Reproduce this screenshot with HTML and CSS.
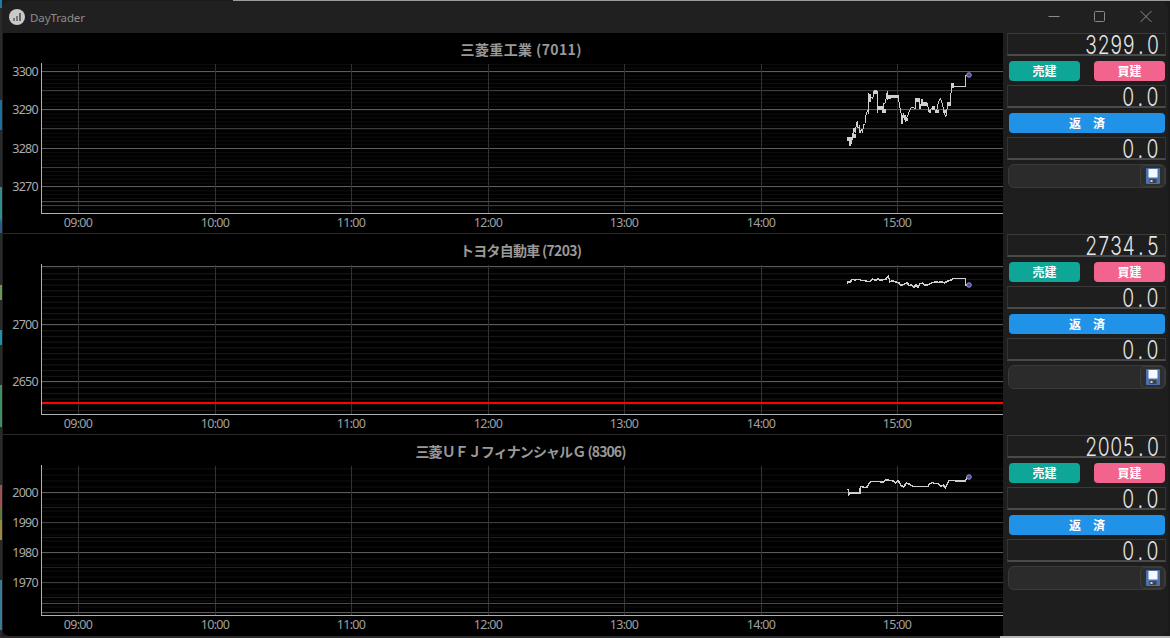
FILE: index.html
```html
<!DOCTYPE html>
<html lang="ja">
<head>
<meta charset="utf-8">
<title>DayTrader</title>
<link rel="stylesheet" href="styles.css">
</head>
<body>
<div class="window">
  <header class="titlebar">
    <svg class="app-icon" viewBox="0 0 16 16" width="16" height="16"><circle cx="8" cy="8" r="8" fill="#c9c9c9"/><rect x="4" y="9" width="2" height="3" fill="#777"/><rect x="7" y="7" width="2" height="5" fill="#777"/><rect x="10" y="4" width="2" height="8" fill="#666"/></svg>
    <span class="app-name">DayTrader</span>
    <div class="win-buttons">
      <svg class="win-btn" viewBox="0 0 46 32" width="46" height="32"><path d="M18.5 15.5h11" stroke="#8a8a8a" fill="none"/></svg>
      <svg class="win-btn" viewBox="0 0 46 32" width="46" height="32"><rect x="18.5" y="10.5" width="10" height="10" rx="1" stroke="#8a8a8a" fill="none"/></svg>
      <svg class="win-btn" viewBox="0 0 46 32" width="46" height="32"><path d="M18.5 10l11 11M29.5 10l-11 11" stroke="#8a8a8a" fill="none"/></svg>
    </div>
  </header>
  <main class="rows">
    <section class="row">
      <svg class="chart" viewBox="3 33 1000 201" width="1000" height="201">
        <defs>
          <pattern id="fine1" width="10" height="3.83" patternUnits="userSpaceOnUse" y="71.5"><rect width="10" height="1" fill="#0e0e0e"/></pattern>
        </defs>
        <rect x="42" y="64" width="961" height="149" fill="url(#fine1)"/>
        <path class="minor" d="M42 90.5H1003M42 128.5H1003M42 167.5H1003M42 205.5H1003"/>
        <path class="major" d="M42 71.5H1003M42 109.5H1003M42 148.5H1003M42 186.5H1003"/>
        <path class="vgrid" d="M78.5 64V213M215.5 64V213M351.5 64V213M488.5 64V213M624.5 64V213M761.5 64V213M897.5 64V213"/>
        <path class="limit" d="M42 201.5H1003"/>
        <path class="axis" d="M41.5 63V213.5H1003"/>
        <path class="sep" d="M3 233.5H1003"/>
        <text class="title" x="521" y="55" textLength="121">三菱重工業 (7011)</text>
        <text class="ylab" x="38" y="76">3300</text><text class="ylab" x="38" y="114">3290</text><text class="ylab" x="38" y="153">3280</text><text class="ylab" x="38" y="191">3270</text>
        <text class="xlab" x="78" y="227">09:00</text><text class="xlab" x="215" y="227">10:00</text><text class="xlab" x="351" y="227">11:00</text><text class="xlab" x="488" y="227">12:00</text><text class="xlab" x="624" y="227">13:00</text><text class="xlab" x="761" y="227">14:00</text><text class="xlab" x="897" y="227">15:00</text>
        <g transform="translate(830 60) scale(.3333)">
          <path class="price" d="M52 235V242H58V255L62 258L64 240H68V218L72 230V205L76 218L80 185H84V205L90 195V218L94 208L98 218L100 195L106 190V172L110 160L113 150L116 162V100L120 125L124 110L128 118L132 92H142V160L146 140L150 150L154 140L158 160L162 130H166L172 92V118L205 105L208 135L213 160L216 192L220 160L226 185L234 165L240 150L246 140L256 148V115H270V148L276 118L282 135L290 125L294 140L298 160L304 145L312 138L318 160L326 125L332 115L338 135L342 160L348 170L350 150L356 130H362L364 72H372V80H406V46H417"/>
          <path class="price-thick" d="M52 236H61V252M66 228H78M80 190H85M116 108H124M133 97H143M144 144H162M173 109H206M162 146V160M216 170H228M226 178H234M256 120H270M272 132H292M296 155H304M306 144H316M318 154H328M340 155H350M352 132H362M364 78H372"/>
          <circle class="dot" cx="417" cy="45" r="7"/>
        </g>
      </svg>
      <aside class="controls">
        <div class="lcd"><span class="lcd-text">3299<span class="pt">.</span>0</span></div>
        <div class="btn-pair"><button class="btn sell">売建</button><button class="btn buy">買建</button></div>
        <div class="lcd"><span class="lcd-text">0<span class="pt">.</span>0</span></div>
        <button class="btn repay">返　済</button>
        <div class="lcd"><span class="lcd-text">0<span class="pt">.</span>0</span></div>
        <div class="save-row"><span class="save-btn"><svg viewBox="0 0 16 16" width="16" height="16"><rect x="1" y="0" width="14" height="16" rx="1" fill="#4c72ad"/><rect x="3.5" y="1" width="9" height="8.5" fill="#f5f8ff"/><rect x="4.5" y="11" width="7" height="4" fill="#3f444c"/><rect x="5.5" y="12" width="2" height="2" fill="#cfd3da"/></svg></span></div>
      </aside>
    </section>
    <section class="row">
      <svg class="chart" viewBox="3 234 1000 201" width="1000" height="201">
        <defs>
          <pattern id="fine2" width="10" height="5.7" patternUnits="userSpaceOnUse" y="267.5"><rect width="10" height="1" fill="#181818"/></pattern>
        </defs>
        <rect x="42" y="266" width="961" height="148" fill="url(#fine2)"/>
        <path class="major" d="M42 266.5H1003M42 324.5H1003M42 381.5H1003"/>
        <path class="vgrid" d="M78.5 265V414M215.5 265V414M351.5 265V414M488.5 265V414M624.5 265V414M761.5 265V414M897.5 265V414"/>
        <path class="limit thick" d="M42 402.5H1003"/>
        <path class="axis" d="M41.5 264V414.5H1003"/>
        <path class="sep" d="M3 434.5H1003"/>
        <text class="title" x="521" y="256" textLength="122">トヨタ自動車 (7203)</text>
        <text class="ylab" x="38" y="329">2700</text><text class="ylab" x="38" y="386">2650</text>
        <text class="xlab" x="78" y="428">09:00</text><text class="xlab" x="215" y="428">10:00</text><text class="xlab" x="351" y="428">11:00</text><text class="xlab" x="488" y="428">12:00</text><text class="xlab" x="624" y="428">13:00</text><text class="xlab" x="761" y="428">14:00</text><text class="xlab" x="897" y="428">15:00</text>
        <g transform="translate(830 265) scale(.3333)">
          <path class="price jag" d="M52 58V50L60 52L66 44H74V46L82 43H90L92 47L104 46L112 50L120 50L128 42L136 46L144 42L152 46L160 44L168 42L175 34L180 50L188 47L196 50L206 53L212 60L218 60L226 56L232 54L238 62L244 60L252 66L258 60L264 66L270 56L278 54L284 60L292 60L300 56L310 52L318 50L326 52L334 50L344 54L352 48L362 46L370 40H406V60H417"/>
          <circle class="dot" cx="417" cy="60" r="7"/>
        </g>
      </svg>
      <aside class="controls">
        <div class="lcd"><span class="lcd-text">2734<span class="pt">.</span>5</span></div>
        <div class="btn-pair"><button class="btn sell">売建</button><button class="btn buy">買建</button></div>
        <div class="lcd"><span class="lcd-text">0<span class="pt">.</span>0</span></div>
        <button class="btn repay">返　済</button>
        <div class="lcd"><span class="lcd-text">0<span class="pt">.</span>0</span></div>
        <div class="save-row"><span class="save-btn"><svg viewBox="0 0 16 16" width="16" height="16"><rect x="1" y="0" width="14" height="16" rx="1" fill="#4c72ad"/><rect x="3.5" y="1" width="9" height="8.5" fill="#f5f8ff"/><rect x="4.5" y="11" width="7" height="4" fill="#3f444c"/><rect x="5.5" y="12" width="2" height="2" fill="#cfd3da"/></svg></span></div>
      </aside>
    </section>
    <section class="row last">
      <svg class="chart" viewBox="3 435 1000 201" width="1000" height="201">
        <defs>
          <pattern id="fine3" width="10" height="6" patternUnits="userSpaceOnUse" y="468.5"><rect width="10" height="1" fill="#0f0f0f"/></pattern>
        </defs>
        <rect x="42" y="466" width="961" height="149" fill="url(#fine3)"/>
        <path class="minor faint" d="M42 507.5H1003M42 537.5H1003M42 567.5H1003M42 597.5H1003"/>
        <path class="minor" d="M42 522.5H1003M42 582.5H1003"/>
        <path class="major" d="M42 492.5H1003M42 552.5H1003M42 612.5H1003"/>
        <path class="vgrid" d="M78.5 466V615M215.5 466V615M351.5 466V615M488.5 466V615M624.5 466V615M761.5 466V615M897.5 466V615"/>
        <path class="limit" d="M42 603.5H1003"/>
        <path class="axis" d="M41.5 465V615.5H1003"/>
        <text class="title" x="521" y="457" textLength="211">三菱ＵＦＪフィナンシャルＧ (8306)</text>
        <text class="ylab" x="38" y="497">2000</text><text class="ylab" x="38" y="527">1990</text><text class="ylab" x="38" y="557">1980</text><text class="ylab" x="38" y="587">1970</text>
        <text class="xlab" x="78" y="629">09:00</text><text class="xlab" x="215" y="629">10:00</text><text class="xlab" x="351" y="629">11:00</text><text class="xlab" x="488" y="629">12:00</text><text class="xlab" x="624" y="629">13:00</text><text class="xlab" x="761" y="629">14:00</text><text class="xlab" x="897" y="629">15:00</text>
        <g transform="translate(830 465) scale(.3333)">
          <path class="price jag" d="M52 74H56V88L60 84H90V70L94 64L104 68L112 66L116 56L124 50H150L158 52L168 44L190 48L196 54L204 46L212 60L220 66L230 54L240 58L248 64H296V60L306 52L314 56H326L332 64L340 60L346 68L352 56L358 46H374L376 48H406L412 36H417"/>
          <circle class="dot" cx="417" cy="36" r="7"/>
        </g>
      </svg>
      <aside class="controls">
        <div class="lcd"><span class="lcd-text">2005<span class="pt">.</span>0</span></div>
        <div class="btn-pair"><button class="btn sell">売建</button><button class="btn buy">買建</button></div>
        <div class="lcd"><span class="lcd-text">0<span class="pt">.</span>0</span></div>
        <button class="btn repay">返　済</button>
        <div class="lcd"><span class="lcd-text">0<span class="pt">.</span>0</span></div>
        <div class="save-row"><span class="save-btn"><svg viewBox="0 0 16 16" width="16" height="16"><rect x="1" y="0" width="14" height="16" rx="1" fill="#4c72ad"/><rect x="3.5" y="1" width="9" height="8.5" fill="#f5f8ff"/><rect x="4.5" y="11" width="7" height="4" fill="#3f444c"/><rect x="5.5" y="12" width="2" height="2" fill="#cfd3da"/></svg></span></div>
      </aside>
    </section>
  </main>
</div>
</body>
</html>
```
FILE: styles.css
```css
* { box-sizing: border-box; }
html, body { margin: 0; height: 100%; }
body {
  width: 1170px;
  height: 638px;
  overflow: hidden;
  padding: 1px 2px 2px 2px;
  background-color: #1a1a1a;
  background-image:
    linear-gradient(to bottom,
      #1a7fa0 0 8px, #2a2a2a 8px 100px, #1f6ea0 100px 130px, #2a2a2a 130px 187px,
      #2f8f8f 187px 218px, #2a5a90 223px 233px, #2a2a2a 233px 285px, #6a9a50 285px 300px,
      #2a2a2a 300px 330px, #2090b0 330px 345px, #2a2a2a 345px 385px, #3f8f60 385px 427px,
      #2a2a2a 427px 485px, #a05050 485px 505px, #5a7a40 510px 520px, #9a8a40 520px 540px,
      #2a2a2a 540px 580px, #3a7a9a 580px 630px, #2a2a2a 630px),
    linear-gradient(to right, transparent 233px, #9a9a9a 233px),
    linear-gradient(to right, #2a2a2a 1000px, #b8b8b8 1000px);
  background-size: 2px 100%, 100% 1px, 100% 2px;
  background-position: left top, left top, left bottom;
  background-repeat: no-repeat;
  font-family: "Noto Sans", "Noto Sans CJK JP", sans-serif;
}
.window {
  width: 1166px;
  height: 635px;
  background: #1e1e1e;
  border-radius: 8px;
  overflow: hidden;
  display: flex;
  flex-direction: column;
}
.titlebar {
  height: 32px;
  flex: none;
  background: #202020;
  display: flex;
  align-items: center;
  padding-left: 7px;
}
.app-icon { flex: none; }
.app-name { margin-left: 5px; color: #8c8c8c; font-size: 11.5px; letter-spacing: -0.1px; }
.win-buttons { margin-left: auto; display: flex; }
.win-btn { display: block; }
.rows { display: flex; flex-direction: column; padding-left: 1px; }
.row { display: flex; height: 201px; }
.row.last { height: 202px; }
.chart { display: block; flex: none; background: #000; }
.controls {
  width: 165px;
  flex: none;
  background: #1e1e1e;
  padding-left: 4px;
  padding-right: 2px;
  display: flex;
  flex-direction: column;
}
.title { fill: #999; font: 700 14px "Noto Sans CJK JP", sans-serif; text-anchor: middle; }
.ylab { fill: #ababab; font: 12.5px "Noto Sans", sans-serif; letter-spacing: -0.7px; text-anchor: end; }
.xlab { fill: #a0a0a0; font: 12.5px "Noto Sans", sans-serif; letter-spacing: -0.7px; text-anchor: middle; }
.minor, .major, .vgrid, .axis, .limit, .sep { fill: none; stroke-width: 1; shape-rendering: crispEdges; }
.minor { stroke: #3e3e3e; }
.minor.faint { stroke: #202020; }
.major { stroke: #5c5c5c; }
.vgrid { stroke: #333; }
.axis { stroke: #b0b0b0; }
.sep { stroke: #2a2a2a; }
.limit { stroke: #d01010; }
.limit.thick { stroke: #ff0000; stroke-width: 2; }
.price { fill: none; stroke: #cfcfcf; stroke-width: 3; shape-rendering: crispEdges; }
.price.jag { stroke-width: 4.5; }
.price-thick { fill: none; stroke: #cfcfcf; stroke-width: 10; shape-rendering: crispEdges; }
.dot { fill: #4a4ab0; stroke: #a8a8c8; stroke-width: 2.5; }
.lcd {
  height: 23px;
  flex: none;
  border-top: 1px solid #3a3a3a;
  border-left: 1px solid #333;
  border-right: 1px solid #333;
  border-bottom: 2px solid #4a4a4a;
  color: #e6e6e6;
  font: 300 26px/21px "Inter", sans-serif;
  font-variant-numeric: tabular-nums;
  text-align: right;
  padding-right: 6px;
}
.lcd-text { display: inline-block; transform: scaleX(.74); transform-origin: right center; }
.pt { display: inline-block; width: 16px; text-align: center; }
.btn {
  display: block;
  border: 0;
  border-radius: 4px;
  height: 20px;
  padding: 0;
  color: #fff;
  font: 700 12px/20px "Noto Sans CJK JP", sans-serif;
}
.btn-pair { display: flex; justify-content: space-between; margin: 5px 1px 4px 2px; }
.sell { width: 71px; background: #0ea696; }
.buy { width: 71px; background: #f2638e; }
.repay { margin: 5px 1px 4px 2px; background: #2092e8; width: 156px; }
.save-row {
  margin: 4px 0 0 1px;
  height: 24px;
  width: 158px;
  background: #2b2b2b;
  border: 1px solid #3a3a3a;
  border-radius: 6px;
  display: flex;
  justify-content: flex-end;
}
.save-btn {
  width: 25px;
  height: 22px;
  background: #2e2e2e;
  border: 1px solid #3c3c3c;
  border-radius: 4px;
  display: flex;
  align-items: center;
  justify-content: center;
}
```
